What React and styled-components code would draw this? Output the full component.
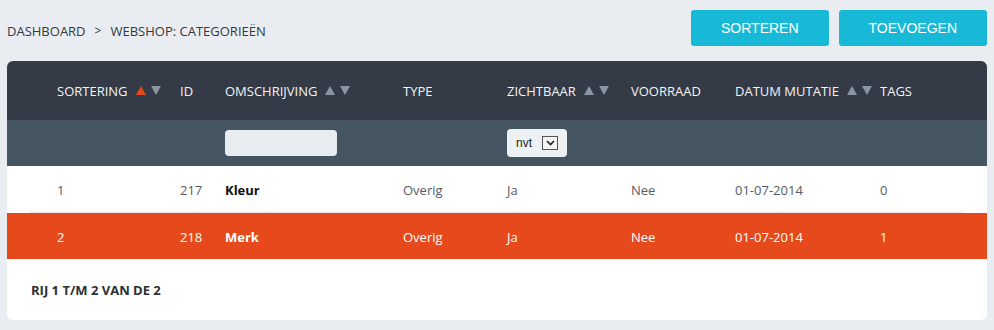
import React from 'react'
import styled, { createGlobalStyle } from 'styled-components'

const GlobalStyle = createGlobalStyle`
    body {
        margin: 0;
        background: #e9ecf0;
        font-family: "Open Sans", "Liberation Sans", sans-serif;
    }
`;

const columns = '50px 123px 45px 178px 104px 124px 104px 145px 1fr';

const headers = [
    { label: 'SORTERING', sort: 'asc' },
    { label: 'ID' },
    { label: 'OMSCHRIJVING', sort: 'none' },
    { label: 'TYPE' },
    { label: 'ZICHTBAAR', sort: 'none' },
    { label: 'VOORRAAD' },
    { label: 'DATUM MUTATIE', sort: 'none' },
    { label: 'TAGS' },
];

const rows = [
    { sort: 1, id: 217, name: 'Kleur', type: 'Overig', visible: 'Ja', stock: 'Nee', date: '01-07-2014', tags: 0 },
    { sort: 2, id: 218, name: 'Merk', type: 'Overig', visible: 'Ja', stock: 'Nee', date: '01-07-2014', tags: 1, active: true },
];

const Arrow = ({ up, color }) => (
    <svg width="10" height="9" viewBox="0 0 10 9">
        <polygon points={up ? '5,0 10,9 0,9' : '0,0 10,0 5,9'} fill={color} />
    </svg>
);

const SortArrows = ({ dir }) => (
    <Arrows>
        <Arrow up color={dir === 'asc' ? '#e64a1c' : '#8a96a2'} />
        <Arrow color="#8a96a2" />
    </Arrows>
);

const App = () => {
    return (
        <Page>
            <GlobalStyle />
            <TopBar>
                <Breadcrumb>
                    <span>DASHBOARD</span>
                    <Sep>&gt;</Sep>
                    <span>WEBSHOP: CATEGORIEËN</span>
                </Breadcrumb>
                <Actions>
                    <Button>SORTEREN</Button>
                    <Button>TOEVOEGEN</Button>
                </Actions>
            </TopBar>
            <Panel>
                <HeadRow>
                    <span />
                    {headers.map(h => (
                        <HeadCell key={h.label}>
                            {h.label}
                            {h.sort && <SortArrows dir={h.sort} />}
                        </HeadCell>
                    ))}
                </HeadRow>
                <FilterRow>
                    <span />
                    <span />
                    <span />
                    <FilterInput type="text" />
                    <span />
                    <FakeSelect>
                        nvt
                        <SelectBox>
                            <svg width="9" height="6" viewBox="0 0 9 6">
                                <polyline points="1,1 4.5,4.5 8,1" fill="none" stroke="#222" strokeWidth="1.6" />
                            </svg>
                        </SelectBox>
                    </FakeSelect>
                </FilterRow>
                {rows.map((r, i) => (
                    <React.Fragment key={r.id}>
                        <DataRow $active={r.active}>
                            <span />
                            <Cell>{r.sort}</Cell>
                            <Cell>{r.id}</Cell>
                            <Cell $bold $active={r.active}>{r.name}</Cell>
                            <Cell>{r.type}</Cell>
                            <Cell>{r.visible}</Cell>
                            <Cell>{r.stock}</Cell>
                            <Cell>{r.date}</Cell>
                            <Cell>{r.tags}</Cell>
                        </DataRow>
                        {i === 0 && <Divider />}
                    </React.Fragment>
                ))}
                <Footer>RIJ 1 T/M 2 VAN DE 2</Footer>
            </Panel>
        </Page>
    )
}

// Page
const Page = styled.div`
    padding: 10px 7px;
`;

// Top bar
const TopBar = styled.div`
    display: flex;
    justify-content: space-between;
    align-items: center;
    height: 36px;
    margin-bottom: 15px;
`;

const Breadcrumb = styled.div`
    display: flex;
    align-items: center;
    padding-top: 5px;
    font-size: 13px;
    color: #333a42;
`;

const Sep = styled.span`
    margin: 0 9px;
    font-size: 12px;
`;

const Actions = styled.div`
    display: flex;
    gap: 10px;
`;

const Button = styled.button`
    height: 36px;
    padding: 0 30px;
    border: none;
    border-radius: 3px;
    background: #17b9d7;
    color: #fff;
    font-family: "Liberation Sans", Arial, sans-serif;
    font-size: 14px;
    cursor: pointer;
`;

// Panel
const Panel = styled.div`
    background: #fff;
    border-radius: 6px;
    overflow: hidden;
`;

const Grid = styled.div`
    display: grid;
    grid-template-columns: ${columns};
    align-items: center;
`;

const HeadRow = styled(Grid)`
    height: 59px;
    background: #343a46;
`;

const HeadCell = styled.div`
    display: flex;
    align-items: center;
    gap: 8px;
    color: #f2f4f6;
    font-size: 13px;
    white-space: nowrap;
`;

const Arrows = styled.span`
    display: flex;
    gap: 5px;
`;

const FilterRow = styled(Grid)`
    height: 46px;
    background: #465562;
`;

const FilterInput = styled.input`
    width: 112px;
    height: 26px;
    box-sizing: border-box;
    border: none;
    border-radius: 4px;
    background: #e9ecf0;
    outline: none;
`;

const FakeSelect = styled.div`
    display: flex;
    align-items: center;
    justify-content: space-between;
    width: 60px;
    height: 28px;
    box-sizing: border-box;
    padding: 0 9px;
    border-radius: 4px;
    background: #eef1f4;
    font-family: "Liberation Sans", Arial, sans-serif;
    font-size: 12px;
    color: #222;
`;

const SelectBox = styled.span`
    display: flex;
    align-items: center;
    justify-content: center;
    width: 14px;
    height: 12px;
    border: 1px solid #555;
    background: #f4f4f4;
`;

// Rows
const DataRow = styled(Grid)`
    height: 46px;
    padding-top: 2px;
    box-sizing: border-box;
    background: ${p => (p.$active ? '#e64a1c' : '#fff')};
    color: ${p => (p.$active ? '#fff' : '#555b62')};
`;

const Cell = styled.div`
    font-size: 13px;
    font-weight: ${p => (p.$bold ? 700 : 400)};
    color: ${p => (p.$bold && !p.$active ? '#111' : 'inherit')};
    white-space: nowrap;
`;

const Divider = styled.div`
    height: 1px;
    margin: 0 24px 0 23px;
    background: #e3e5e8;
`;

const Footer = styled.div`
    height: 61px;
    display: flex;
    align-items: center;
    padding-left: 24px;
    font-size: 13px;
    font-weight: 700;
    color: #2a3038;
`;

export default App
